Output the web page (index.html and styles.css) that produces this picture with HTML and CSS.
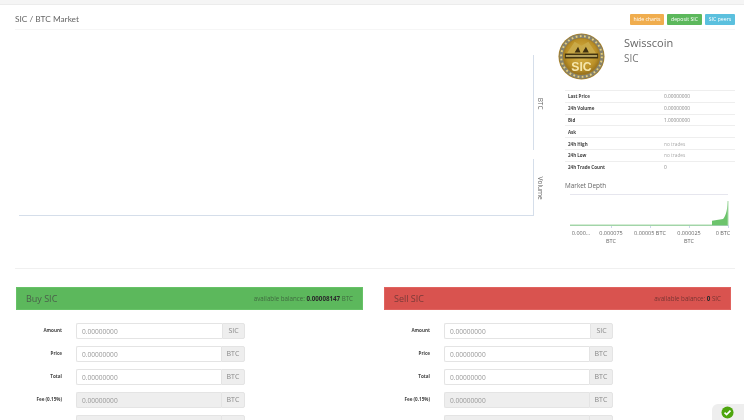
FILE: index.html
```html
<!DOCTYPE html>
<html lang="en">
<head>
<meta charset="utf-8">
<title>SIC / BTC Market</title>
<link rel="stylesheet" href="styles.css">
</head>
<body>
<div class="topbar"></div>
<main class="page">
  <header class="header">
    <h1 class="title">SIC / BTC Market</h1>
    <div class="actions">
      <a class="btn btn-orange">hide charts</a>
      <a class="btn btn-green">deposit SIC</a>
      <a class="btn btn-blue">SIC peers</a>
    </div>
  </header>

  <section class="market">
    <div class="charts">
      <div class="pane pane-price"><span class="pane-label">BTC</span></div>
      <div class="pane pane-volume"><span class="pane-label">Volume</span></div>
    </div>
    <div class="info">
      <div class="coin">
        <svg class="logo" viewBox="0 0 48 48" width="47" height="47" aria-hidden="true">
          <defs>
            <radialGradient id="gold" cx="50%" cy="45%" r="60%">
              <stop offset="0" stop-color="#dcb84e"/>
              <stop offset="0.7" stop-color="#bb9027"/>
              <stop offset="1" stop-color="#86631a"/>
            </radialGradient>
          </defs>
          <circle cx="24" cy="24" r="23.5" fill="#a87f22"/>
          <circle cx="24" cy="24" r="20.8" fill="none" stroke="#85826f" stroke-width="3.6"/>
          <circle cx="24" cy="24" r="20.8" fill="none" stroke="#e6cf7a" stroke-width="2" stroke-dasharray="1.8 2.55"/>
          <circle cx="24" cy="24" r="18.4" fill="url(#gold)"/>
          <path d="M9 21 L17 9 L24 13 L31 9 L39 21 Z" fill="#c9a948"/>
          <path d="M17 20 l3.5 -6 l2.5 6 z M25 20 l3.5 -6 l3 6 z" fill="#3f3010"/>
          <rect x="7" y="21" width="34" height="5" fill="#40320f"/>
          <rect x="8" y="22.6" width="32" height="1.7" fill="#c9b46a"/>
          <text class="logo-text" x="24" y="38.5" text-anchor="middle">SIC</text>
        </svg>
        <div class="coin-name">
          <div class="coin-title">Swisscoin</div>
          <div class="coin-symbol">SIC</div>
        </div>
      </div>

      <table class="stats">
        <tr><th>Last Price</th><td>0.00000000</td></tr>
        <tr><th>24h Volume</th><td>0.00000000</td></tr>
        <tr><th>Bid</th><td>1.00000000</td></tr>
        <tr><th>Ask</th><td></td></tr>
        <tr><th>24h High</th><td class="muted">no trades</td></tr>
        <tr><th>24h Low</th><td class="muted">no trades</td></tr>
        <tr><th>24h Trade Count</th><td>0</td></tr>
      </table>

      <h2 class="depth-title">Market Depth</h2>
      <svg class="depth" viewBox="0 0 170 50" width="170" height="50" aria-hidden="true">
        <line x1="5" y1="0.5" x2="163" y2="0.5" class="grid-line"/>
        <line x1="5" y1="31.5" x2="163" y2="31.5" class="axis-line"/>
        <line x1="46.5" y1="31" x2="46.5" y2="34" class="axis-line"/>
        <line x1="85.5" y1="31" x2="85.5" y2="34" class="axis-line"/>
        <line x1="124.5" y1="31" x2="124.5" y2="34" class="axis-line"/>
        <line x1="163.5" y1="31" x2="163.5" y2="34" class="axis-line"/>
        <path d="M5 31 H147 V26.7 L158 25 C160 23 162 19 163 7 V31.5 H5 Z" class="depth-area"/>
        <line x1="5" y1="31" x2="147" y2="31" class="depth-line"/>
        <line x1="163" y1="7" x2="163" y2="31" class="depth-line"/>
        <text class="depth-label" x="16" y="41" text-anchor="middle">0.000...</text>
        <text class="depth-label" x="46" y="41" text-anchor="middle">0.000075</text>
        <text class="depth-label" x="46" y="49" text-anchor="middle">BTC</text>
        <text class="depth-label" x="85" y="41" text-anchor="middle">0.00005 BTC</text>
        <text class="depth-label" x="124" y="41" text-anchor="middle">0.000025</text>
        <text class="depth-label" x="124" y="49" text-anchor="middle">BTC</text>
        <text class="depth-label" x="158" y="41" text-anchor="middle">0 BTC</text>
      </svg>
    </div>
  </section>

  <section class="trade">
    <div class="trade-col">
      <div class="panel panel-buy">
        <span class="panel-title">Buy SIC</span>
        <span class="panel-balance">available balance: <b>0.00008147</b> BTC</span>
      </div>
      <form class="form">
        <div class="row"><label>Amount</label><div class="group"><input placeholder="0.00000000"><span class="addon addon-sic">SIC</span></div></div>
        <div class="row"><label>Price</label><div class="group"><input placeholder="0.00000000"><span class="addon">BTC</span></div></div>
        <div class="row"><label>Total</label><div class="group"><input placeholder="0.00000000"><span class="addon">BTC</span></div></div>
        <div class="row"><label>Fee (0.15%)</label><div class="group"><input disabled placeholder="0.00000000"><span class="addon">BTC</span></div></div>
        <div class="row"><label>Net Total</label><div class="group"><input disabled><span class="addon">BTC</span></div></div>
      </form>
    </div>
    <div class="trade-col">
      <div class="panel panel-sell">
        <span class="panel-title">Sell SIC</span>
        <span class="panel-balance">available balance: <b>0</b> SIC</span>
      </div>
      <form class="form">
        <div class="row"><label>Amount</label><div class="group"><input placeholder="0.00000000"><span class="addon addon-sic">SIC</span></div></div>
        <div class="row"><label>Price</label><div class="group"><input placeholder="0.00000000"><span class="addon">BTC</span></div></div>
        <div class="row"><label>Total</label><div class="group"><input placeholder="0.00000000"><span class="addon">BTC</span></div></div>
        <div class="row"><label>Fee (0.15%)</label><div class="group"><input disabled placeholder="0.00000000"><span class="addon">BTC</span></div></div>
        <div class="row"><label>Net Total</label><div class="group"><input disabled><span class="addon">BTC</span></div></div>
      </form>
    </div>
  </section>
</main>

<div class="status">
  <svg viewBox="0 0 14 14" width="13" height="13" aria-hidden="true">
    <circle cx="7" cy="7" r="6.5" fill="#4ea60e"/>
    <path d="M3.8 7.2 L6 9.3 L10.2 5" fill="none" stroke="#fff" stroke-width="1.8"/>
  </svg>
</div>
</body>
</html>
```

FILE: styles.css
```css
* { box-sizing: border-box; }

html, body {
  margin: 0;
  height: 420px;
  overflow: hidden;
  background: #fff;
}

body {
  font-family: "Open Sans", "Noto Sans", sans-serif;
  color: #666;
  filter: blur(0.4px);
}

.topbar {
  height: 5px;
  background: #f5f5f5;
  border-bottom: 1px solid #ececec;
}

.page {
  padding: 0 9px 0 15px;
}

/* header */
.header {
  display: flex;
  justify-content: space-between;
  align-items: flex-start;
  height: 25px;
  padding-top: 9px;
  border-bottom: 1px solid #f6f6f6;
}

.title {
  margin: 0;
  font-family: Lato, "Open Sans", sans-serif;
  font-size: 8.3px;
  line-height: 10px;
  font-weight: 400;
  color: #666;
}

.actions {
  display: flex;
  gap: 3px;
}

.btn {
  height: 11px;
  padding: 0;
  border-radius: 1px;
  color: #fff;
  font-size: 5.2px;
  line-height: 11px;
  white-space: nowrap;
  text-align: center;
}

.btn-orange { background: #f0ad4e; width: 34px; }
.btn-green { background: #5cb85c; width: 35px; }
.btn-blue { background: #5bc0de; width: 30px; }

/* market */
.market {
  display: flex;
  height: 239px;
  border-bottom: 1px solid #f0f0f0;
}

.charts {
  width: 515px;
  margin-left: 4px;
  padding-top: 25px;
  display: flex;
  flex-direction: column;
  gap: 9px;
}

.pane {
  position: relative;
  border-right: 1px solid #d5deea;
}

.pane-price { height: 95px; }
.pane-volume { height: 57px; border-bottom: 1px solid #d5deea; }

.pane-label {
  position: absolute;
  left: 100%;
  top: 50%;
  margin-left: 3px;
  transform: translateY(-45%);
  writing-mode: vertical-rl;
  font-size: 6.5px;
  line-height: 8px;
  color: #666;
}

.info {
  width: 170px;
  margin-left: 31px;
}

.coin {
  display: flex;
  height: 60px;
  padding-top: 3px;
  margin-left: -7px;
}

.logo {
  flex: none;
}

.logo-text {
  font-family: "Liberation Sans", sans-serif;
  font-size: 12.5px;
  font-weight: 700;
  fill: #f6e7ad;
}

.coin-name {
  margin-left: 19px;
  padding-top: 3px;
}

.coin-title {
  font-size: 11px;
  line-height: 14px;
  color: #666;
}

.coin-symbol {
  margin-top: 2px;
  font-size: 10px;
  line-height: 12px;
  color: #777;
}

.stats {
  width: 170px;
  border-collapse: collapse;
  table-layout: fixed;
  font-size: 4.8px;
}

.stats tr {
  height: 11.8px;
  border-top: 1px solid #eee;
}

.stats th {
  width: 99px;
  padding: 0 0 0 3px;
  text-align: left;
  font-size: 4.5px;
  font-weight: 700;
  color: #444;
}

.stats td {
  padding: 0;
  color: #888;
}

.stats td.muted { color: #aaa; }

.depth-title {
  margin: 8px 0 3px;
  font-size: 6.4px;
  line-height: 10px;
  font-weight: 400;
  color: #666;
}

.depth { display: block; overflow: visible; }
.grid-line { stroke: #e6e6ee; }
.axis-line { stroke: #ccd6eb; }
.depth-area { fill: #6cc46c; }
.depth-line { stroke: #a8dba8; stroke-width: 1; }

.depth-label {
  font-size: 5.5px;
  fill: #666;
}

/* trade */
.trade {
  display: grid;
  grid-template-columns: 347px 347px;
  column-gap: 21px;
  margin-left: 1px;
  padding-top: 18px;
}

.panel {
  display: flex;
  justify-content: space-between;
  align-items: center;
  height: 23px;
  padding: 0 9px;
  color: #4d4d4d;
}

.panel-buy { background: #5cb85c; border: 1px solid #67c267; }
.panel-sell { background: #d9534f; border: 1px solid #e0635f; }

.panel-title {
  font-size: 9px;
  color: #4a5f4a;
}

.panel-sell .panel-title { color: #7a3a38; }

.panel-balance {
  font-size: 6.2px;
  color: #3f6a3f;
}

.panel-sell .panel-balance { color: #7a3533; }

.panel-balance b { color: #2b2b2b; }

.form {
  display: flex;
  flex-direction: column;
  gap: 7px;
  padding-top: 13px;
}

.row {
  display: flex;
  align-items: flex-start;
  height: 16px;
}

.row label {
  width: 46px;
  margin-right: 14px;
  padding-top: 3.5px;
  text-align: right;
  font-size: 4.6px;
  line-height: 7px;
  font-weight: 700;
  color: #444;
}

.group {
  display: flex;
  width: 169px;
  height: 16px;
}

.group input {
  flex: 1;
  min-width: 0;
  height: 16px;
  padding: 0 5px;
  border: 1px solid #e4e4e4;
  border-right: 0;
  border-radius: 2px 0 0 2px;
  background: #fff;
  font-family: inherit;
  font-size: 6.6px;
  outline: none;
}

.group input::placeholder { color: #999; opacity: 1; }

.group input:disabled {
  background: #eee;
}

.addon {
  flex: none;
  width: 24px;
  border: 1px solid #e4e4e4;
  border-radius: 0 2px 2px 0;
  background: #eee;
  text-align: center;
  font-size: 7px;
  line-height: 14px;
  color: #888;
}

.addon-sic { width: 23px; }

.status {
  position: fixed;
  right: 0;
  bottom: 0;
  width: 32px;
  height: 16px;
  padding: 2px 0 0 9px;
  background: #eee;
  border-radius: 6px 0 0 0;
}

.status svg { display: block; }
```
